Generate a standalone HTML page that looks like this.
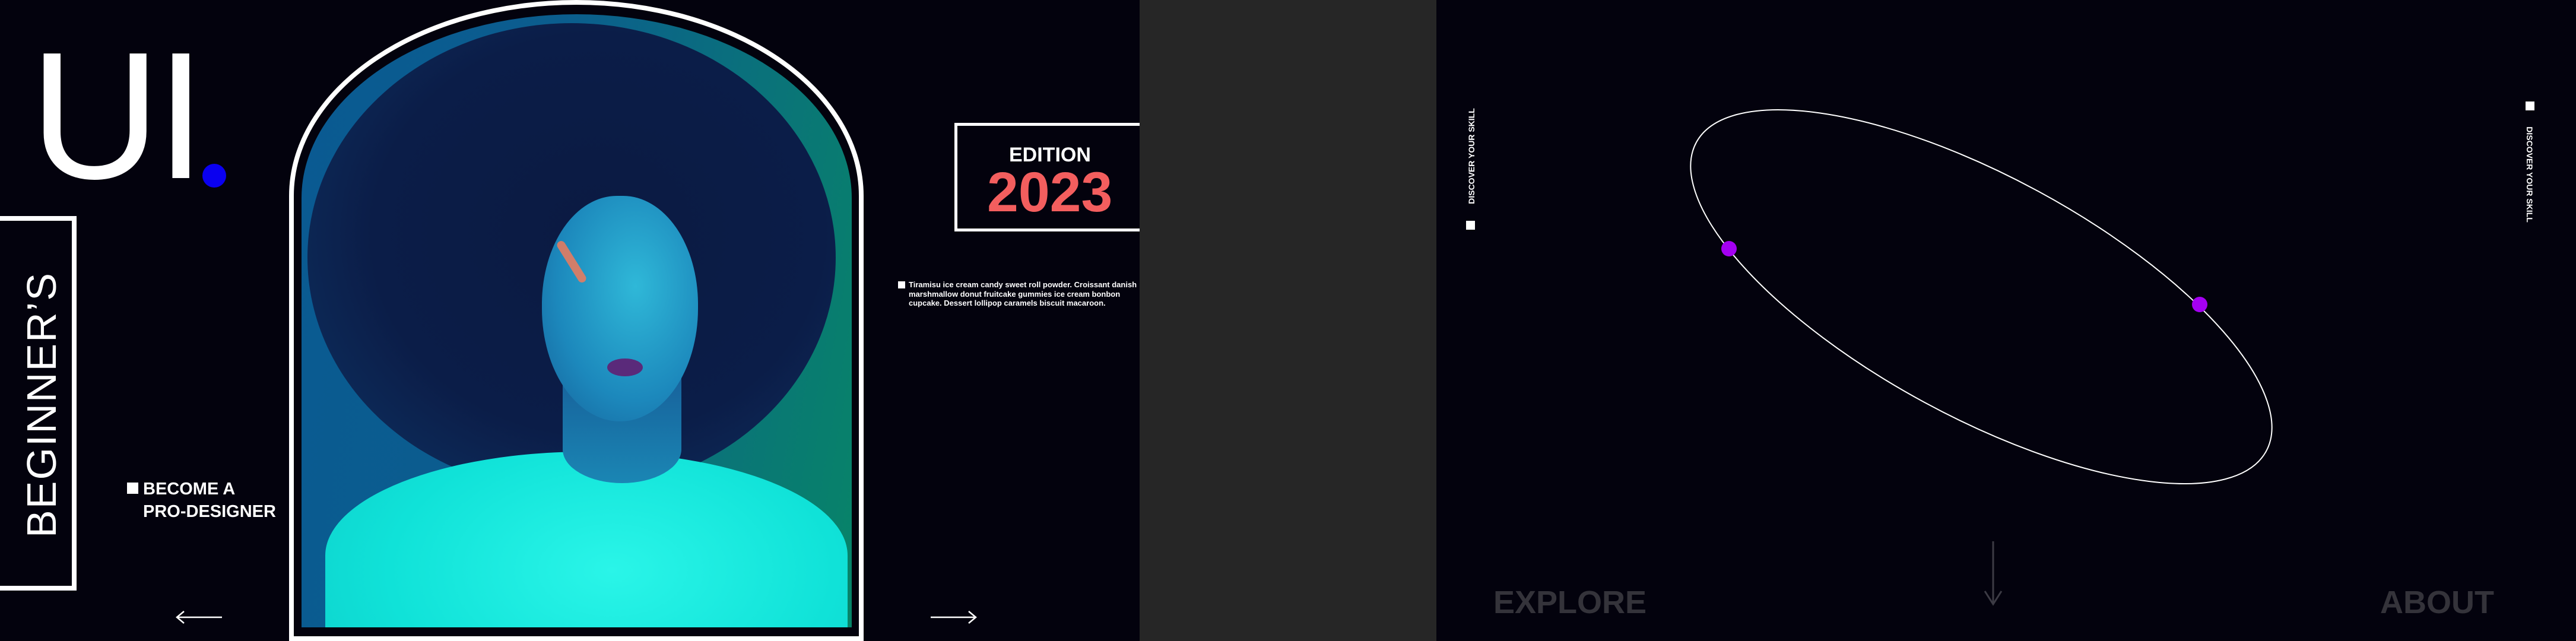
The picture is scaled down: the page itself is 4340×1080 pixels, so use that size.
<!DOCTYPE html>
<html style="width:4340px;height:1080px;overflow:hidden"><head><meta charset="utf-8"><style>
*{margin:0;padding:0;box-sizing:border-box}
body{width:4340px;height:1080px;background:#03020d;position:relative;overflow:hidden;font-family:"Liberation Sans",sans-serif;color:#fff}
.a{position:absolute}
</style></head><body>
<!-- left panel -->
<div class="a" style="left:50px;top:40px;font-size:305px;line-height:310px;font-weight:normal;letter-spacing:-8px">UI</div>
<div class="a" style="left:341px;top:276px;width:40px;height:40px;border-radius:50%;background:#0a00f0"></div>
<div class="a" style="left:-8px;top:364px;width:137px;height:631px;border:8px solid #fff"></div>
<div class="a" style="left:70px;top:682px;transform:translate(-50%,-50%) rotate(-90deg);font-size:70px;line-height:70px;white-space:nowrap;letter-spacing:2px">BEGINNER’S</div>
<div class="a" style="left:214px;top:813px;width:19px;height:19px;background:#fff"></div>
<div class="a" style="left:241px;top:805px;font-size:29px;line-height:38px;font-weight:bold">BECOME A<br>PRO-DESIGNER</div>
<svg class="a" style="left:290px;top:1025px" width="90" height="30"><path d="M84 15H8M20 5L8 15L20 25" stroke="#fff" stroke-width="2.5" fill="none"/></svg>
<svg class="a" style="left:1562px;top:1025px" width="90" height="30"><path d="M6 15H82M70 5L82 15L70 25" stroke="#fff" stroke-width="2.5" fill="none"/></svg>
<!-- arch -->
<div class="a" style="left:487px;top:0;width:968px;height:1080px;border:8px solid #fff;border-radius:484px 484px 0 0/330px 330px 0 0"></div>
<div class="a" style="left:508px;top:24px;width:927px;height:1033px;border-radius:464px 464px 0 0/310px 310px 0 0;overflow:hidden;background:linear-gradient(100deg,#0a5a92 0%,#0b5d8e 40%,#0a7478 75%,#078468 100%)">
  <div class="a" style="left:10px;top:15px;width:890px;height:790px;border-radius:50%;background:radial-gradient(ellipse at 55% 45%,#0b1a42 0%,#0b1d48 55%,#0d2a58 78%,rgba(13,42,88,0) 100%)"></div>
  <div class="a" style="left:40px;top:737px;width:880px;height:500px;border-radius:50% 50% 0 0/35% 35% 0 0;background:radial-gradient(ellipse at 55% 40%,#2af5e8 0%,#10e2d8 55%,#0ccac8 100%)"></div>
  <div class="a" style="left:440px;top:600px;width:200px;height:190px;background:linear-gradient(#17609a,#1a86b4);border-radius:0 0 50% 50%/0 0 30% 30%"></div>
  <div class="a" style="left:405px;top:306px;width:263px;height:380px;border-radius:48% 48% 50% 50%;background:radial-gradient(ellipse at 60% 40%,#2fb8d8 0%,#1c88bc 60%,#166098 100%)"></div>
  <div class="a" style="left:415px;top:410px;width:80px;height:14px;background:#f07a5a;transform:rotate(58deg);border-radius:8px;opacity:.85"></div>
  <div class="a" style="left:515px;top:580px;width:60px;height:30px;border-radius:50%;background:#5a2a7a"></div>
</div>
<!-- edition -->
<div class="a" style="left:1608px;top:207px;width:330px;height:183px;border:5px solid #fff"></div>
<div class="a" style="left:1700px;top:244px;font-size:34px;line-height:34px;font-weight:bold">EDITION</div>
<div class="a" style="left:1663px;top:274px;font-size:95px;line-height:100px;font-weight:bold;color:#f35e5e">2023</div>
<div class="a" style="left:1513px;top:474px;width:12px;height:12px;background:#fff"></div>
<div class="a" style="left:1531px;top:472px;font-size:13px;line-height:15.5px;font-weight:bold;white-space:nowrap">Tiramisu ice cream candy sweet roll powder. Croissant danish<br>marshmallow donut fruitcake gummies ice cream bonbon<br>cupcake. Dessert lollipop caramels biscuit macaroon.</div>
<!-- gray -->
<div class="a" style="left:1920px;top:0;width:500px;height:1080px;background:#262626"></div>
<!-- right panel -->
<div class="a" style="left:2479px;top:263px;transform:translate(-50%,-50%) rotate(-90deg);font-size:14px;line-height:14px;font-weight:bold;white-space:nowrap">DISCOVER YOUR SKILL</div>
<div class="a" style="left:2470px;top:372px;width:15px;height:15px;background:#fff"></div>
<div class="a" style="left:4262px;top:294px;transform:translate(-50%,-50%) rotate(90deg);font-size:14px;line-height:14px;font-weight:bold;white-space:nowrap">DISCOVER YOUR SKILL</div>
<div class="a" style="left:4255px;top:171px;width:15px;height:15px;background:#fff"></div>
<svg class="a" style="left:0;top:0" width="4340" height="1080">
<ellipse cx="3338" cy="500" rx="546" ry="202" transform="rotate(28.45 3338 500)" fill="none" stroke="#fff" stroke-width="2"/>
<circle cx="2913" cy="419" r="13" fill="#a400f2"/>
<circle cx="3706" cy="513" r="13" fill="#a400f2"/>
<path d="M3358 912V1018M3344 996L3358 1018L3372 996" stroke="#3c3b44" stroke-width="3" fill="none"/>
</svg>
<div class="a" style="left:2516px;top:985px;font-size:54px;line-height:60px;font-weight:bold;color:#34333a">EXPLORE</div>
<div class="a" style="left:4010px;top:985px;font-size:54px;line-height:60px;font-weight:bold;color:#34333a">ABOUT</div>
</body></html>
